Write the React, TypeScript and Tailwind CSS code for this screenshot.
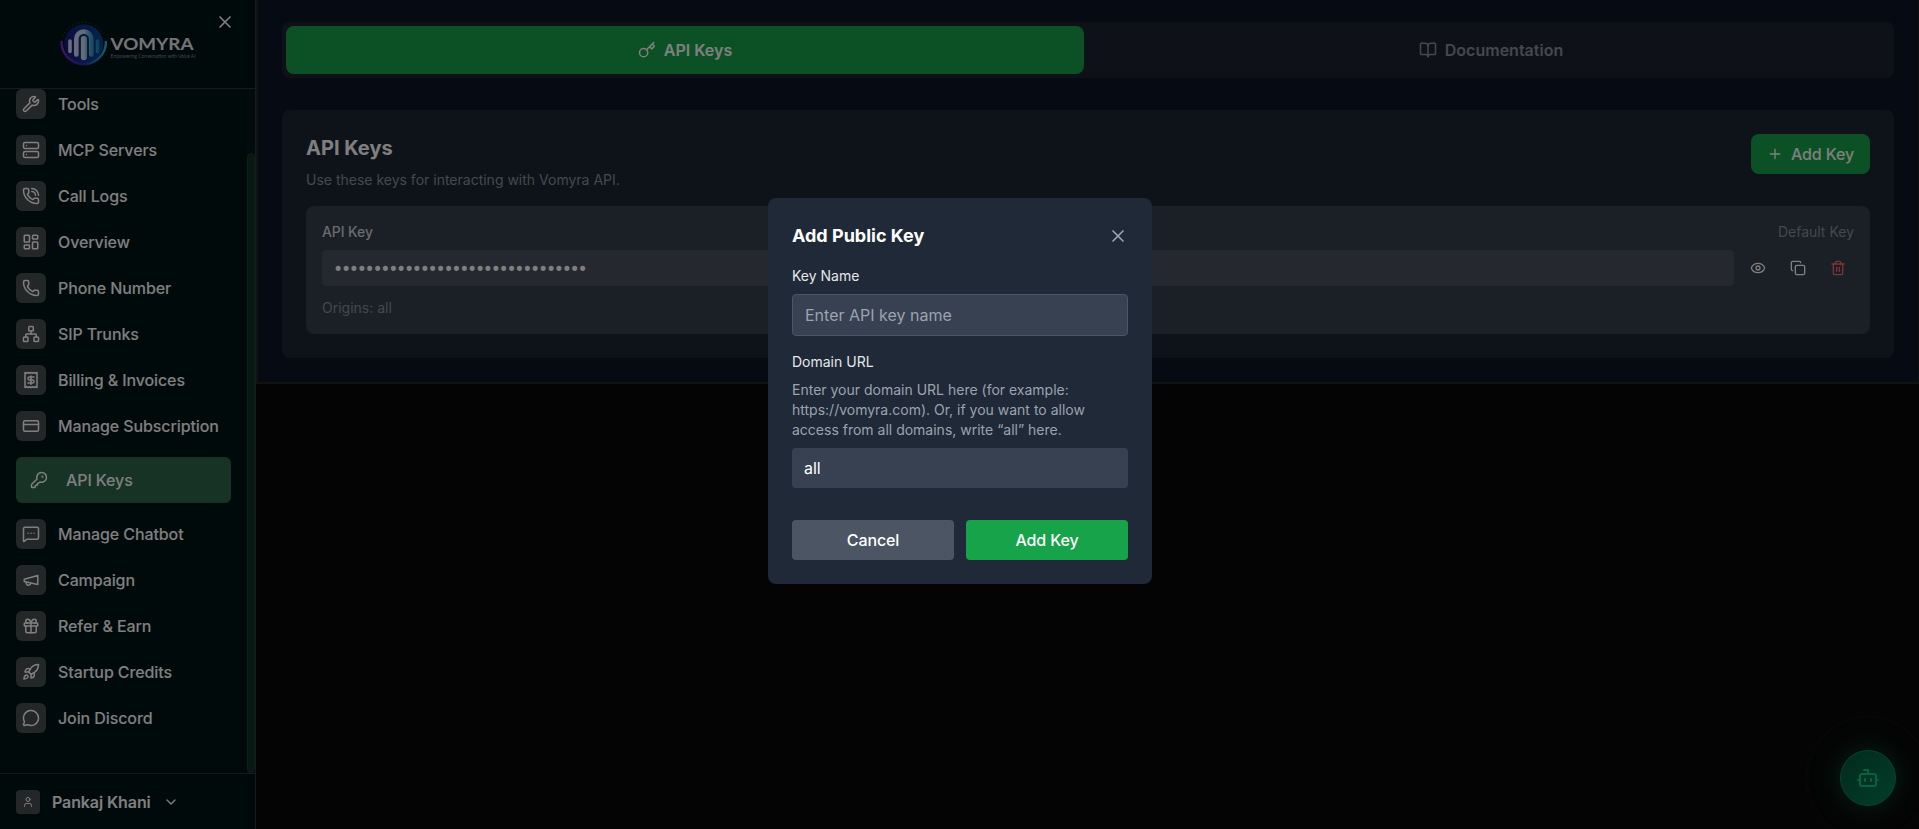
import type { ReactNode } from 'react';
import {
  BookOpen,
  Bot,
  ChevronDown,
  Copy,
  CreditCard,
  Eye,
  Gift,
  Key,
  KeyRound,
  LayoutDashboard,
  MessageCircle,
  MessageSquareMore,
  Network,
  Phone,
  PhoneCall,
  Plus,
  Rocket,
  Server,
  Trash2,
  User,
  Wrench,
  X,
} from 'lucide-react';

interface IconProps {
  className?: string;
}

function DollarReceipt({ className }: IconProps) {
  return (
    <svg className={className} viewBox="0 0 24 24" fill="none" stroke="currentColor" strokeWidth="2" strokeLinecap="round" strokeLinejoin="round">
      <path d="M4 2v20l2-1 2 1 2-1 2 1 2-1 2 1 2-1 2 1V2l-2 1-2-1-2 1-2-1-2 1-2-1-2 1Z" />
      <path d="M16 8h-6a2 2 0 1 0 0 4h4a2 2 0 1 1 0 4H8" />
      <path d="M12 17.5v-11" />
    </svg>
  );
}

function Horn({ className }: IconProps) {
  return (
    <svg className={className} viewBox="0 0 24 24" fill="none" stroke="currentColor" strokeWidth="2" strokeLinecap="round" strokeLinejoin="round">
      <path d="m3 11 18-5v12L3 14v-3z" />
      <path d="M11.6 16.8a3 3 0 1 1-5.8-1.6" />
    </svg>
  );
}

const navItems = [
  { label: 'Tools', icon: Wrench },
  { label: 'MCP Servers', icon: Server },
  { label: 'Call Logs', icon: PhoneCall },
  { label: 'Overview', icon: LayoutDashboard },
  { label: 'Phone Number', icon: Phone },
  { label: 'SIP Trunks', icon: Network },
  { label: 'Billing & Invoices', icon: DollarReceipt },
  { label: 'Manage Subscription', icon: CreditCard },
  { label: 'API Keys', icon: KeyRound, active: true },
  { label: 'Manage Chatbot', icon: MessageSquareMore },
  { label: 'Campaign', icon: Horn },
  { label: 'Refer & Earn', icon: Gift },
  { label: 'Startup Credits', icon: Rocket },
  { label: 'Join Discord', icon: MessageCircle },
];

function Logo() {
  return (
    <svg width="144" height="50" viewBox="0 0 144 50">
      <defs>
        <linearGradient id="ring" x1="0" x2="1">
          <stop offset="0" stopColor="#7a2be0" />
          <stop offset="0.5" stopColor="#1f2fa0" />
          <stop offset="1" stopColor="#2fb4d8" />
        </linearGradient>
        <linearGradient id="disc" x1="0" x2="1">
          <stop offset="0" stopColor="#1a1680" />
          <stop offset="1" stopColor="#0c4a96" />
        </linearGradient>
        <linearGradient id="bars" x1="12" x2="43" y1="0" y2="0" gradientUnits="userSpaceOnUse">
          <stop offset="0" stopColor="#ddd8f0" />
          <stop offset="0.5" stopColor="#c4dcec" />
          <stop offset="0.75" stopColor="#3f9fc0" />
          <stop offset="1" stopColor="#1286b4" />
        </linearGradient>
      </defs>
      <circle cx="27.700" cy="24" r="19.500" fill="url(#disc)" />
      <path d="M5.500 22a22.200 22.200 0 0 0 44.400 0" fill="none" stroke="url(#ring)" strokeWidth="2.400" strokeLinecap="round" />
      <path d="M7 16a22.500 22.500 0 0 1 41.500 0" fill="none" stroke="#3a5070" strokeWidth="1" strokeDasharray="1 2.500" />
      <g fill="none" stroke="url(#bars)" strokeLinecap="round">
        <path d="M14 21v10.500M41.500 21v10.500" strokeWidth="3.600" />
        <path d="M20.300 34.500V19a7.500 7.500 0 0 1 15 0v15.500" strokeWidth="4.600" />
        <path d="M27.900 19v18.200" strokeWidth="6" />
      </g>
      <text x="54.500" y="30" fontFamily="Lato" fontWeight="700" fontSize="17" textLength="83" lengthAdjust="spacingAndGlyphs" fill="#e8e8e8">VOMYRA</text>
      <text x="54.500" y="38" fontFamily="Lato" fontSize="4.800" textLength="85" lengthAdjust="spacingAndGlyphs" fill="#7a9098">Empowering Conversation with Voice AI</text>
    </svg>
  );
}

function Sidebar() {
  return (
    <aside className="flex h-full w-64 shrink-0 flex-col border-r border-[#333536] bg-[#021417]">
      <div className="relative flex h-[89px] shrink-0 items-start border-b border-[#333536] pl-14 pt-5">
        <Logo />
        <X className="absolute left-[215px] top-3 h-5 w-5" />
      </div>
      <div className="flex min-h-0 flex-1 overflow-hidden">
        <nav className="flex h-full w-[247px] flex-col gap-4 px-4 tracking-[-0.1px]">
          {navItems.map(({ label, icon: Icon, active }) =>
            active ? (
              <div key={label} className="flex h-[46px] shrink-0 items-center gap-[18px] rounded-md bg-[#2e664c] pl-[14px]">
                <Icon className="h-[18px] w-[18px]" />
                <span className="font-medium">{label}</span>
              </div>
            ) : (
              <div key={label} className="flex h-[30px] shrink-0 items-center gap-3">
                <div className="flex h-[30px] w-[30px] items-center justify-center rounded-md bg-[#484f50]">
                  <Icon className="h-[18px] w-[18px]" />
                </div>
                <span className="whitespace-nowrap font-medium">{label}</span>
              </div>
            ),
          )}
        </nav>
        <div className="w-2 bg-[#04191a] pt-16">
          <div className="h-full rounded-full border border-[#1c3c2e] bg-[#103024]" />
        </div>
      </div>
      <div className="flex h-14 shrink-0 items-center border-t border-[#333536] pl-4">
        <div className="flex h-6 w-6 items-center justify-center rounded bg-[#484f50]">
          <User className="h-3 w-3" />
        </div>
        <span className="ml-3 font-semibold tracking-[-0.1px]">Pankaj Khani</span>
        <ChevronDown className="ml-3 h-4 w-4" />
      </div>
    </aside>
  );
}

function ApiKeysPanel() {
  return (
    <section className="h-[248px] rounded-lg bg-[#1d2632] px-6 pt-6">
      <div className="flex h-[72px] justify-between">
        <div>
          <h2 className="text-xl font-bold leading-7">API Keys</h2>
          <p className="mt-2 text-sm text-[#8a9099]">Use these keys for interacting with Vomyra API.</p>
        </div>
        <button className="flex h-10 items-center gap-2 rounded-lg bg-[#16a34a] px-4 font-medium tracking-[-0.12px]">
          <Plus className="h-4 w-4" />
          Add Key
        </button>
      </div>
      <div className="h-32 rounded-lg bg-[#373e4c] p-4">
        <div className="flex justify-between text-sm">
          <span className="font-medium tracking-[-0.1px] text-[#d1d5db]">API Key</span>
          <span className="text-[#8a9099]">Default Key</span>
        </div>
        <div className="mt-2 flex items-center">
          <div className="flex h-9 flex-1 items-center rounded bg-[#4a505c] pl-[11px] pt-[3px] font-['DejaVu_Sans_Mono',monospace] text-[17px] leading-none tracking-[-2.35px]">
            ••••••••••••••••••••••••••••••••
          </div>
          <div className="flex w-[120px] items-center gap-6 pl-4">
            <Eye className="h-4 w-4" />
            <Copy className="h-4 w-4" />
            <Trash2 className="h-4 w-4 text-[#f86a6a]" />
          </div>
        </div>
        <p className="mt-3 text-sm text-[#8a9099]">Origins: all</p>
      </div>
    </section>
  );
}

function AddKeyModal() {
  return (
    <div className="w-96 rounded-lg bg-[#1f2937] p-6 text-white">
      <div className="flex h-7 items-center justify-between">
        <h3 className="text-lg font-bold">Add Public Key</h3>
        <X className="h-5 w-5 text-[#9ca3af]" />
      </div>
      <div className="mt-4 text-sm text-[#e5e7eb]">Key Name</div>
      <div className="mt-2 flex h-[42px] items-center rounded border border-[#4b5563] bg-[#374151] px-3 text-[#9ca3af]">
        Enter API key name
      </div>
      <div className="mt-4 text-sm text-[#e5e7eb]">Domain URL</div>
      <p className="mt-2 text-sm text-[#9ca3af]">
        Enter your domain URL here (for example: https://vomyra.com). Or, if you want to allow access from all domains, write “all” here.
      </p>
      <div className="mt-2 flex h-10 items-center rounded bg-[#374151] px-3">all</div>
      <div className="mt-8 grid grid-cols-2 gap-3 font-medium tracking-[-0.12px]">
        <button className="h-10 rounded bg-[#4b5563]">Cancel</button>
        <button className="h-10 rounded bg-[#16a34a]">Add Key</button>
      </div>
    </div>
  );
}

function Overlay({ children }: { children: ReactNode }) {
  return <div className="absolute inset-0 flex items-center justify-center bg-black/50 pb-[47px] pl-px">{children}</div>;
}

export default function App() {
  return (
    <div className="relative flex h-[829px] w-full overflow-hidden bg-[#080808] font-['Inter',sans-serif] text-base text-white">
      <Sidebar />
      <main className="flex-1">
        <div className="h-[384px] border-b-2 border-l-2 border-r border-[#242424] bg-[#0d1524] px-6 pt-[22px]">
          <div className="mb-8 grid h-14 grid-cols-2 gap-2 rounded-lg bg-[#1d2430] p-1 font-semibold">
            <div className="flex items-center justify-center gap-2 rounded-lg bg-[#16a34a]">
              <Key className="h-[18px] w-[18px]" />
              API Keys
            </div>
            <div className="flex items-center justify-center gap-2 text-[#8a9099]">
              <BookOpen className="h-[18px] w-[18px]" />
              Documentation
            </div>
          </div>
          <ApiKeysPanel />
        </div>
      </main>

      {/* Chat assistant launcher */}
      <div className="absolute bottom-[23px] right-[23px] flex h-14 w-14 items-center justify-center rounded-full border border-[#0a8a62] bg-linear-to-br from-[#04553a] to-[#067a52] text-[#0ac48c] shadow-[0_0_28px_rgba(16,185,129,0.35)]">
        <div className="absolute -inset-[35px] rounded-full border border-emerald-500/5" />
        <Bot className="h-6 w-6" />
      </div>
      <Overlay>
        <AddKeyModal />
      </Overlay>
    </div>
  );
}
